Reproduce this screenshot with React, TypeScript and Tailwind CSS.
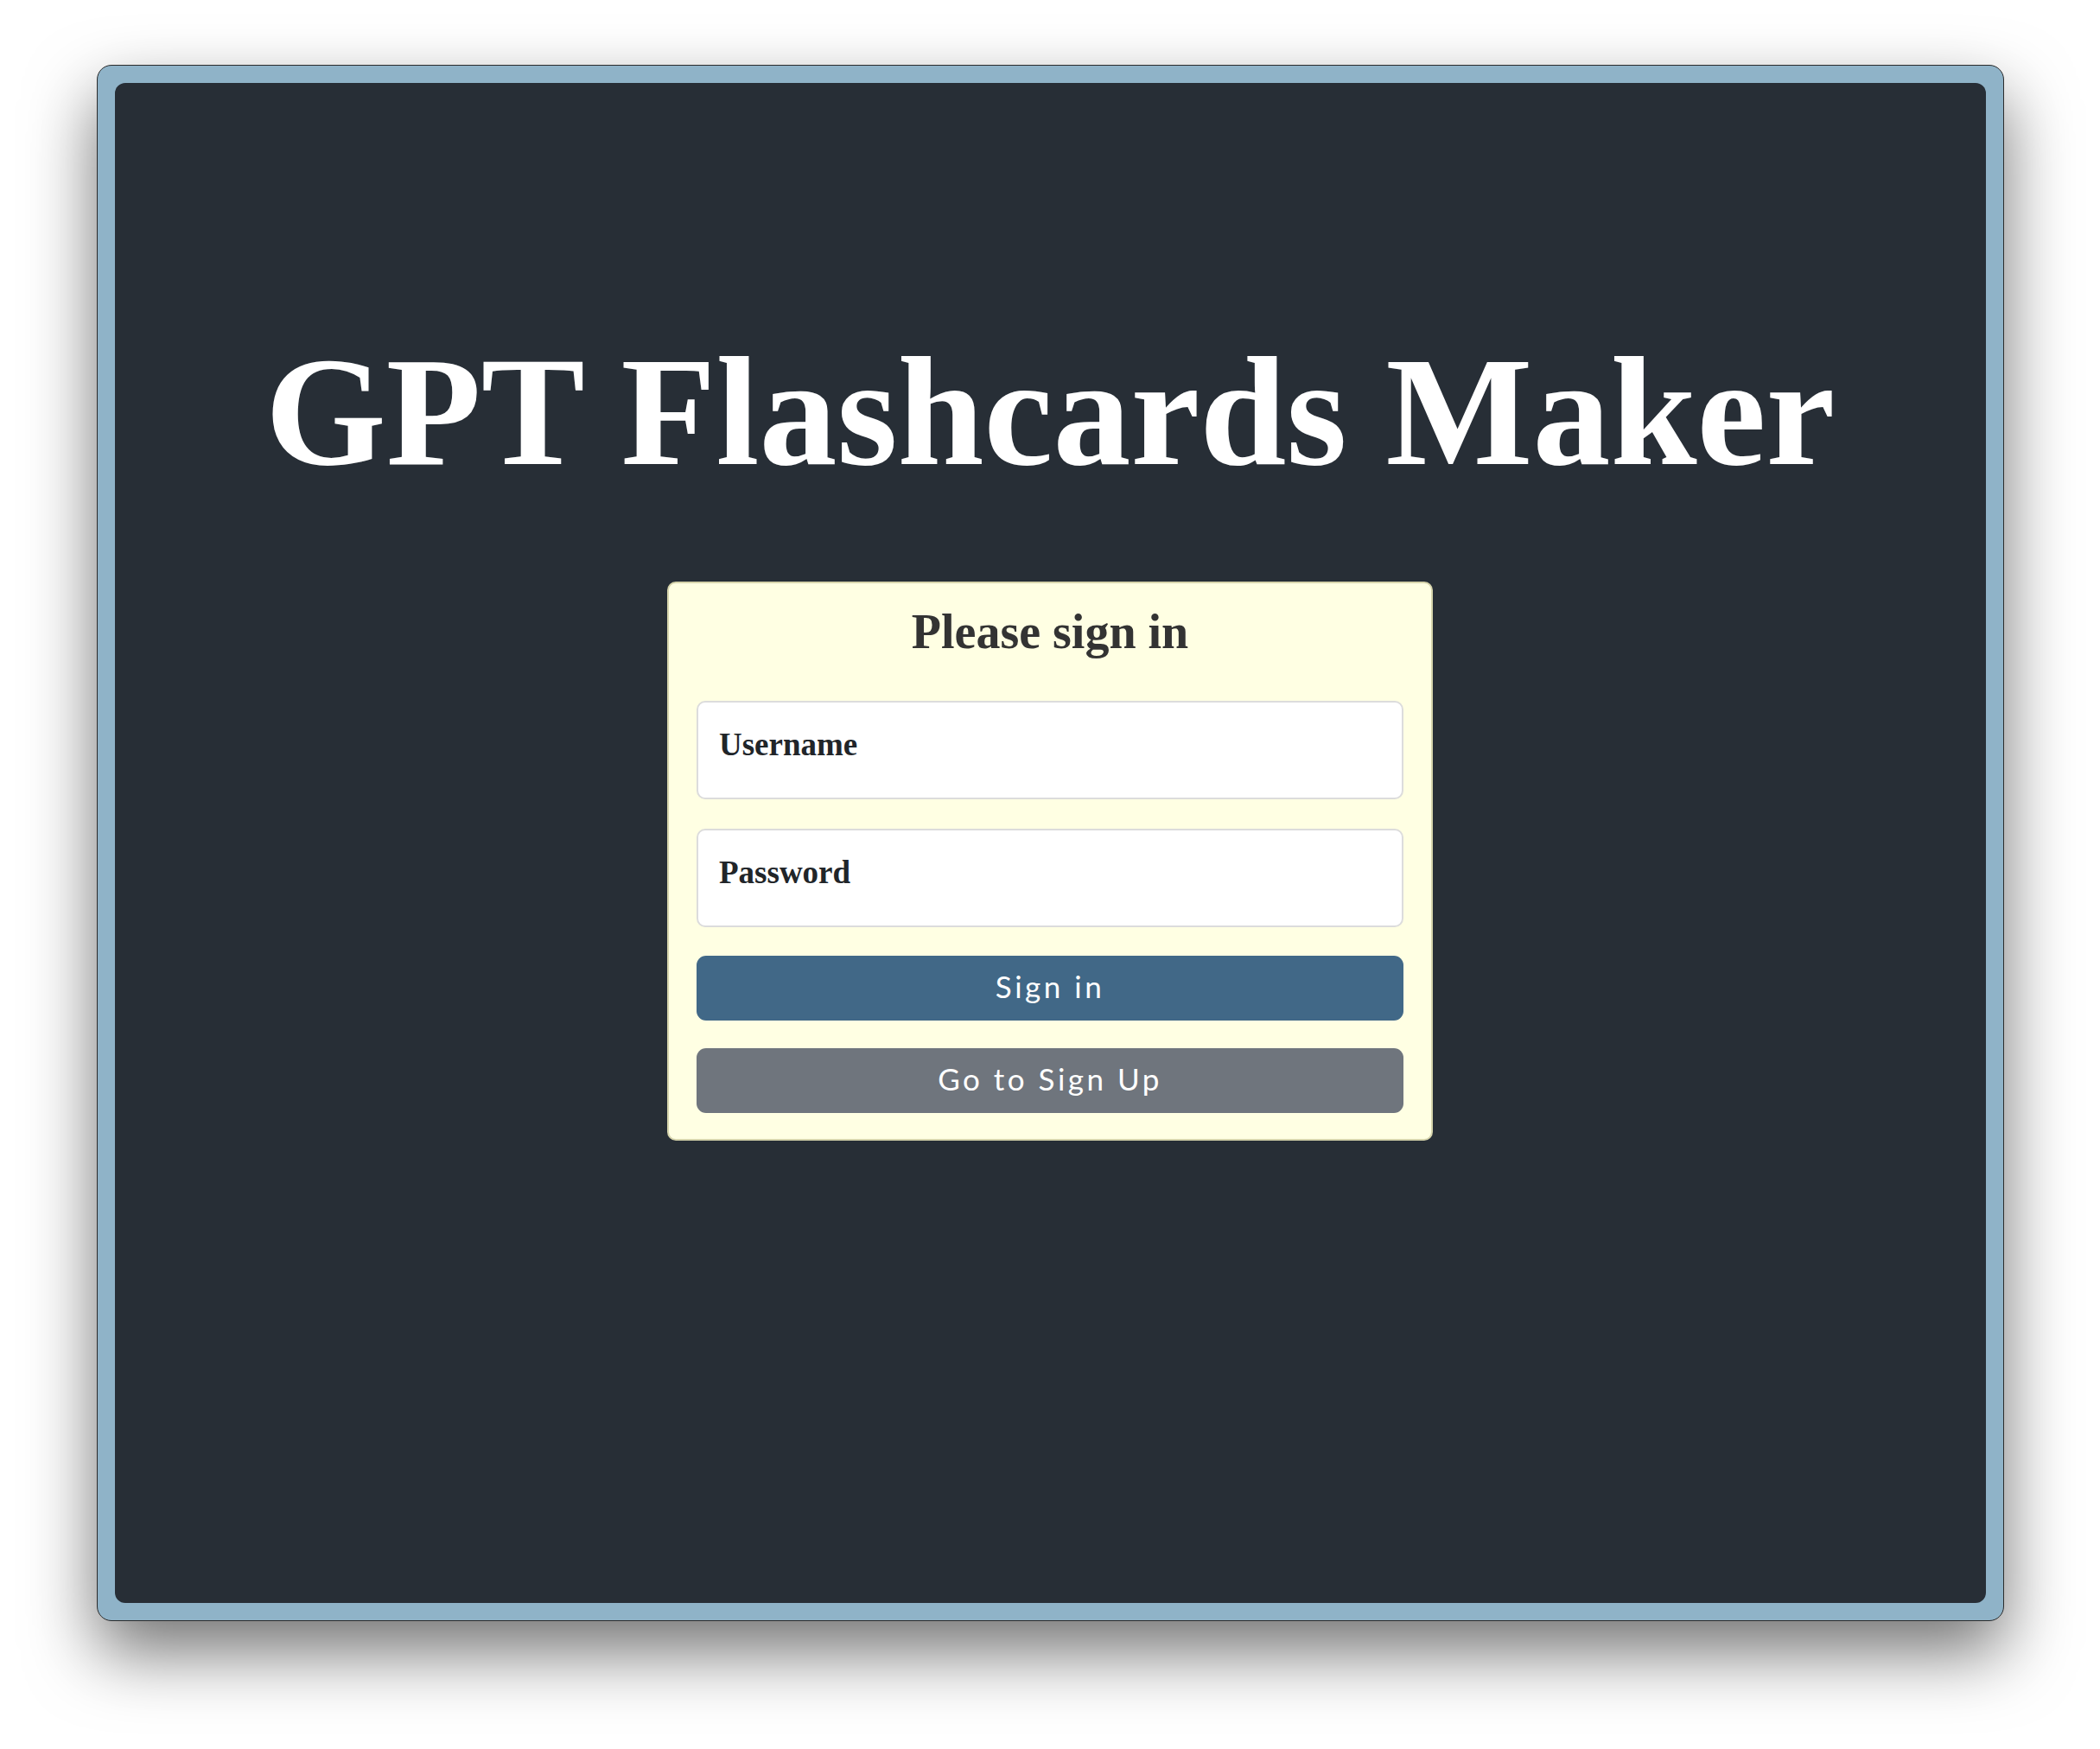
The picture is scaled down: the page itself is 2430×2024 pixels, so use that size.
import React from 'react'

const serif = { fontFamily: '"Liberation Serif", "Times New Roman", serif' }
const sans = { fontFamily: 'Lato, "Open Sans", sans-serif' }

function Field({ label }: { label: string }) {
  return (
    <div className="w-full h-[114px] bg-white border-2 border-[#dcdcdc] rounded-[10px] pl-[24px] pt-[30px]">
      <span style={serif} className="block text-[37px] leading-none font-bold text-[#212529]">
        {label}
      </span>
    </div>
  )
}

export default function App() {
  return (
    <div className="w-full min-h-screen bg-white pt-[75px]">
      <div className="mx-auto w-[2207px] h-[1801px] bg-[#8fb3c8] border border-[#2b2b2b] rounded-[17px] p-[20px] shadow-[0_36px_80px_rgba(0,0,0,0.55)]">
        <div className="w-full h-full bg-[#272e36] rounded-[12px] flex flex-col items-center pt-[291px]">
          <h1 style={serif} className="text-[180px] leading-none font-bold text-white whitespace-nowrap">
            GPT Flashcards Maker
          </h1>

          <div className="mt-[106px] w-[886px] bg-[#ffffe3] border-2 border-[#d6d4ac] rounded-[10px] px-[32px] pt-[28px] pb-[30px] flex flex-col">
            <h2 style={serif} className="text-[56px] leading-none font-bold text-[#333333] text-center">
              Please sign in
            </h2>
            <div className="mt-[52px] flex flex-col gap-[34px]">
              <Field label="Username" />
              <Field label="Password" />
            </div>
            <button
              style={sans}
              className="mt-[33px] h-[75px] w-full rounded-[11px] bg-[#416887] text-white text-[35px] tracking-[3.5px] pb-[5px] flex items-center justify-center"
            >
              Sign in
            </button>
            <button
              style={sans}
              className="mt-[32px] h-[75px] w-full rounded-[11px] bg-[#6f757d] text-white text-[35px] tracking-[3.5px] pb-[5px] flex items-center justify-center"
            >
              Go to Sign Up
            </button>
          </div>
        </div>
      </div>
    </div>
  )
}
